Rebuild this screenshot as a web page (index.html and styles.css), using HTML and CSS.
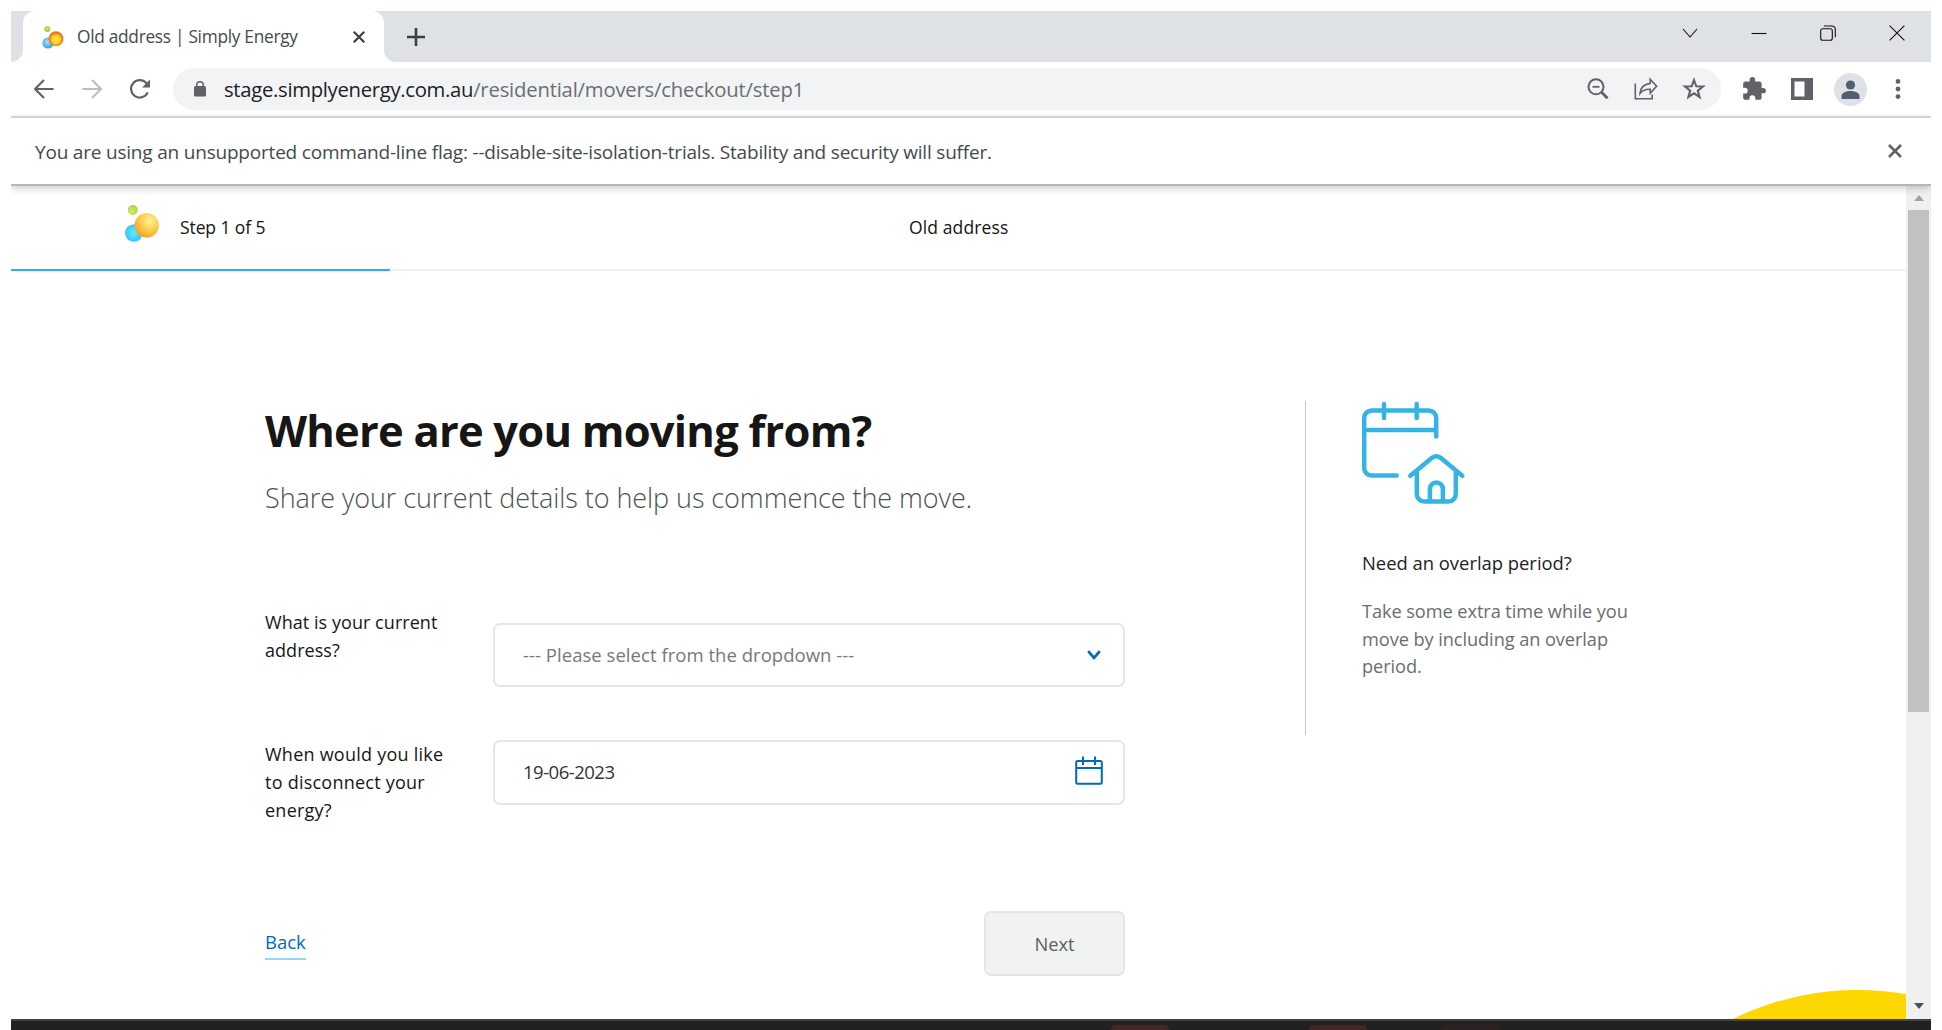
FILE: index.html
```
<!DOCTYPE html>
<html lang="en">
<head>
<meta charset="utf-8">
<title>Old address | Simply Energy</title>
<link rel="stylesheet" href="styles.css">
</head>
<body>
<div class="window">
  <div class="tabstrip">
    <div class="prev-tab"></div>
    <div class="tab">
      <svg class="favicon" width="22" height="24" viewBox="0 0 22 24">
        <defs>
          <radialGradient id="fo" cx=".5" cy=".55" r=".5"><stop offset="0" stop-color="#fff04a"/><stop offset=".55" stop-color="#fdd01f"/><stop offset=".85" stop-color="#f4811f"/><stop offset="1" stop-color="#e8701a"/></radialGradient>
          <radialGradient id="fb" cx=".45" cy=".4" r=".6"><stop offset="0" stop-color="#a9e0fb"/><stop offset="1" stop-color="#2f9fe0"/></radialGradient>
          <radialGradient id="fg" cx=".5" cy=".4" r=".6"><stop offset="0" stop-color="#d5e87a"/><stop offset="1" stop-color="#9cc43a"/></radialGradient>
        </defs>
        <circle cx="5.3" cy="3" r="3" fill="url(#fg)"/><circle cx="6" cy="17" r="5.6" fill="url(#fb)"/><circle cx="14" cy="12.7" r="7.4" fill="url(#fo)"/>
      </svg>
      <span class="tab-title">Old address | Simply Energy</span>
      <svg class="tab-close" width="12" height="12" viewBox="0 0 12 12"><path d="M.7.7l10.6 10.6M11.3.7L.7 11.3" stroke="#3c4043" stroke-width="2.2"/></svg>
    </div>
    <svg class="new-tab" width="18" height="18" viewBox="0 0 18 18"><path d="M9 0v18M0 9h18" stroke="#3c4043" stroke-width="2.6"/></svg>
    <div class="win-controls">
      <svg width="16" height="16" viewBox="0 0 16 16"><path d="M1 4l7 8 7-8"/></svg>
      <svg width="16" height="16" viewBox="0 0 16 16"><path d="M.5 8.5h15"/></svg>
      <svg width="16" height="16" viewBox="0 0 16 16"><rect x=".7" y="3.7" width="11.6" height="11.6" rx="2"/><path d="M3.8 1h7.6q3.9 0 3.9 3.8v7.4"/></svg>
      <svg width="16" height="16" viewBox="0 0 16 16"><path d="M.6.6l14.8 14.8M15.4.6L.6 15.4"/></svg>
    </div>
  </div>

  <div class="toolbar">
    <div class="nav">
      <svg width="20" height="20" viewBox="0 0 20 20" stroke="#5f6368"><path d="M19.5 10H2M10 1L1 10l9 9"/></svg>
      <svg width="20" height="20" viewBox="0 0 20 20" stroke="#bcbec1"><path d="M.5 10H18M10 1l9 9-9 9"/></svg>
      <svg width="22" height="22" viewBox="0 0 22 22" stroke="#5f6368"><path d="M18.7 14.4A8.7 8.7 0 1 1 17.6 5.4"/><path d="M21 1.500v8h-8z" fill="#5f6368" stroke="none"/></svg>
    </div>
    <div class="omnibox">
      <svg class="lock" width="12" height="16" viewBox="0 0 12 16"><rect y="5" width="12" height="10.5" rx="1.5" fill="#5f6368"/><path d="M2.7 6V4a3.3 3.3 0 0 1 6.600 0v2" fill="none" stroke="#5f6368" stroke-width="1.5"/></svg>
      <span class="host">stage.simplyenergy.com.au</span><span class="path">/residential/movers/checkout/step1</span>
      <div class="omni-icons">
        <svg width="24" height="24" viewBox="0 0 24 24" fill="none" stroke="#5f6368" stroke-width="2"><circle cx="10" cy="9.8" r="7.5"/><path d="M6.5 9.8h7" stroke-width="1.8"/><path d="M15.3 15l6.2 6.2" stroke-width="2.8"/></svg>
        <svg width="24" height="24" viewBox="0 0 24 24" fill="none" stroke="#5f6368" stroke-width="1.6"><path d="M1.3 6.5v15.2h16.9v-4.2"/><path d="M16.2 2.3l6.4 6.9-6.4 6.9v-3.9c-4.2-.2-7.6.8-10.2 4.3.4-5.2 3.2-9.2 10.2-10.100z"/></svg>
        <svg width="24" height="24" viewBox="0 0 24 24" fill="none" stroke="#5f6368" stroke-width="2.1"><path d="M12 3l2.3 6.3 6.7.2-5.2 4.100 1.8 6.4-5.6-3.7-5.6 3.7 1.8-6.4L3 9.5l6.7-.2z"/></svg>
      </div>
    </div>
    <div class="actions">
      <svg width="26" height="26" viewBox="0 0 24 24" fill="#5f6368"><path d="M20.5 11H19V7c0-1.1-.9-2-2-2h-4V3.5a2.5 2.5 0 0 0-5 0V5H4c-1.1 0-2 .9-2 2v3.8h1.5a2.7 2.7 0 0 1 0 5.4H2V20c0 1.1.9 2 2 2h3.8v-1.5a2.7 2.7 0 0 1 5.4 0V22H17c1.1 0 2-.9 2-2v-4h1.5a2.5 2.5 0 0 0 0-5z"/></svg>
      <svg width="22" height="22" viewBox="0 0 22 22"><path d="M0 0h22v22H0zM3.5 3.5v15h10v-15z" fill="#5f6368" fill-rule="evenodd"/></svg>
      <svg width="33" height="33" viewBox="0 0 33 33"><circle cx="16.5" cy="16.5" r="16.5" fill="#dee1e6"/><circle cx="16.5" cy="12" r="4.6" fill="#535d70"/><path d="M7.5 26v-3c0-3.2 5-5 9-5s9 1.8 9 5v3z" fill="#535d70"/></svg>
      <svg width="6" height="20" viewBox="0 0 6 20" fill="#5f6368"><circle cx="3" cy="2.4" r="2.4"/><circle cx="3" cy="10" r="2.4"/><circle cx="3" cy="17.6" r="2.4"/></svg>
    </div>
  </div>

  <div class="infobar">
    <span>You are using an unsupported command-line flag: --disable-site-isolation-trials. Stability and security will suffer.</span>
    <svg width="14" height="14" viewBox="0 0 14 14"><path d="M1 1l12 12M13 1L1 13" stroke="#5f6368" stroke-width="2.6"/></svg>
  </div>

  <div class="viewport">
    <div class="page">
      <header class="steps">
        <svg class="logo" width="36" height="38" viewBox="0 0 36 38">
          <defs>
            <radialGradient id="lo" cx=".62" cy=".32" r=".7"><stop offset="0" stop-color="#fff0a0"/><stop offset=".5" stop-color="#fdd24e"/><stop offset="1" stop-color="#f8a02c"/></radialGradient>
            <radialGradient id="lb" cx=".5" cy=".5" r=".55"><stop offset="0" stop-color="#5ff0fe"/><stop offset="1" stop-color="#33bff8"/></radialGradient>
            <radialGradient id="lg" cx=".4" cy=".65" r=".6"><stop offset="0" stop-color="#d3ea66"/><stop offset="1" stop-color="#aed845"/></radialGradient>
          </defs>
          <circle cx="7.8" cy="5" r="5" fill="url(#lg)"/><circle cx="8.8" cy="28" r="8.8" fill="url(#lb)"/><circle cx="21.7" cy="20.3" r="12.2" fill="url(#lo)"/>
        </svg>
        <span class="step-count">Step 1 of 5</span>
        <span class="step-name">Old address</span>
      </header>
      <div class="progress"><div class="progress-fill"></div></div>

      <main class="content">
        <section class="form">
          <h1>Where are you moving from?</h1>
          <p class="lead">Share your current details to help us commence the move.</p>
          <div class="row address-row">
            <label>What is your current<br>address?</label>
            <div class="field select">
              <span>--- Please select from the dropdown ---</span>
              <svg width="14" height="10" viewBox="0 0 14 10"><path d="M1.2 1.2L7 7.8l5.8-6.6" fill="none" stroke="#006bb8" stroke-width="2.8"/></svg>
            </div>
          </div>
          <div class="row date-row">
            <label>When would you like<br>to disconnect your<br>energy?</label>
            <div class="field date">
              <span>19-06-2023</span>
              <svg width="28" height="29" viewBox="0 0 28 29" fill="none" stroke="#006bb8" stroke-width="2"><rect x="1.2" y="5" width="25.6" height="22.7" rx="1.5"/><path d="M1 12h26M8 .5v8.5M20 .5v8.5"/></svg>
            </div>
          </div>
          <div class="form-footer">
            <a class="back">Back</a>
            <button class="next">Next</button>
          </div>
        </section>
        <aside class="tip">
          <svg width="104" height="104" viewBox="0 0 104 104" fill="none" stroke="#35b3e4" stroke-width="4.5" stroke-linecap="round" stroke-linejoin="round">
            <path d="M34.7 74.500H9.7a7.5 7.5 0 0 1-7.5-7.5V17A7.5 7.5 0 0 1 9.7 9.500h57a7.5 7.5 0 0 1 7.5 7.5V35.500M2.2 29h72M22 3v14M54.7 3v14"/>
            <path d="M48.300 74.800l21.700-18q4.300-3 8.600 0l21.700 18M54.800 71.500V93a7.500 7.500 0 0 0 7.500 7.500h24a7.500 7.500 0 0 0 7.500-7.500V71.500M67.900 100.500V88a6.500 6.500 0 0 1 13 0v12.500"/>
          </svg>
          <h2>Need an overlap period?</h2>
          <p>Take some extra time while you<br>move by including an overlap<br>period.</p>
        </aside>
      </main>
      <div class="blob"></div>
    </div>
    <div class="scrollbar">
      <div class="arrow up"></div>
      <div class="thumb"></div>
      <div class="arrow down"></div>
    </div>
  </div>
  <div class="taskbar"><i class="glow g1"></i><i class="glow g2"></i><i class="glow g3"></i></div>
</div>
</body>
</html>
```
FILE: styles.css
```
* { box-sizing: border-box; }
body { margin: 0; background: #fff; font-family: "Open Sans", "Noto Sans", sans-serif; overflow: hidden; }
svg { display: block; flex: none; }
h1, h2, p { margin: 0; }
span, h1, .lead { white-space: nowrap; }
.window { width: 1920px; height: 1019px; margin: 11px 0 0 11px; display: flex; flex-direction: column; overflow: hidden; }

/* Tab strip */
.tabstrip { height: 51px; flex: none; display: flex; align-items: center; background: linear-gradient(#fff, #fff) 0 100% / 385px 12px no-repeat #dee1e6; }
.prev-tab { width: 12px; height: 51px; background: #dee1e6; border-bottom-right-radius: 12px; }
.tab { width: 361px; height: 51px; background: #fff; border-radius: 12px 12px 0 0; display: flex; align-items: center; padding: 0 19px; }
.favicon { margin-top: 2px; }
.tab-title { margin-left: 13px; width: 276px; font-size: 17.3px; letter-spacing: -.28px; color: #45494d; }
.new-tab { box-sizing: content-box; padding: 17px 12px 16px 23px; margin-right: auto; background: #dee1e6; border-bottom-left-radius: 12px; }
.win-controls { display: flex; gap: 53px; margin: -8px 26px 0 0; }
.win-controls svg { fill: none; stroke: #111; stroke-width: 1.1; }

/* Toolbar */
.toolbar { height: 56px; flex: none; display: flex; align-items: center; border-bottom: 2px solid #dadcdf; background: #fff; }
.nav { width: 162px; display: flex; align-items: center; gap: 27.5px; padding-left: 23px; }
.nav svg { fill: none; stroke-width: 2.2; }
.omnibox { width: 1548px; height: 42px; border-radius: 21px; background: #f1f3f4; display: flex; align-items: center; padding: 0 15px 0 21px; font-size: 20.3px; }
.lock { margin-right: 18px; }
.host { color: #202124; letter-spacing: -.31px; }
.path { color: #6b6f73; letter-spacing: -.2px; }
.omni-icons { margin-left: auto; display: flex; gap: 24px; }
.actions { display: flex; align-items: center; padding-left: 20px; }
.actions svg:nth-child(2) { margin-left: 24px; }
.actions svg:nth-child(3) { margin-left: 21px; }
.actions svg:nth-child(4) { margin-left: 28px; }

.infobar { height: 68px; flex: none; display: flex; align-items: center; justify-content: space-between; padding: 1px 29px 0 24px; border-bottom: 2px solid #b4b6b8; font-size: 19px; letter-spacing: -.2px; color: #45494d; position: relative; z-index: 1; background: #fff; box-shadow: 0 2px 8px rgba(0,0,0,.22); }
.infobar svg { margin-top: -2px; }

/* Page */
.viewport { height: 833px; flex: none; display: flex; }
.page { width: 1895px; position: relative; overflow: hidden; }
.steps { height: 83px; display: flex; align-items: center; padding-bottom: 2px; font-size: 17.5px; font-weight: 500; color: #141414; }
.logo { margin: -5px 0 0 114px; }
.step-count { margin-left: 19px; width: 729px; letter-spacing: -.1px; }
.step-name { letter-spacing: .12px; }
.progress { height: 2px; background: #f1f1f1; }
.progress-fill { width: 379px; height: 2px; background: #31afe0; }
.content { display: flex; padding: 130px 0 0 254px; }
.form { width: 860px; }
h1 { margin-top: 5px; font-size: 43.5px; line-height: 50px; font-weight: 700; letter-spacing: -.78px; color: #161616; }
.lead { margin-top: 24px; font-size: 27px; line-height: 36px; font-weight: 300; letter-spacing: -.07px; color: #4d5255; }
.row { display: flex; }
.row label { width: 228px; font-size: 18px; line-height: 27.5px; font-weight: 500; letter-spacing: .05px; color: #161616; }
.address-row { margin-top: 93px; }
.date-row { margin-top: 53px; }
.date-row label { line-height: 28px; letter-spacing: .24px; }
.field { width: 632px; height: 65px; border: 2px solid #e5e6e6; border-radius: 7px; display: flex; align-items: center; justify-content: space-between; padding-left: 28px; font-size: 18.5px; }
.select { height: 64px; margin-top: 14px; padding: 0 22px 2px 28px; color: #76797b; letter-spacing: .04px; }
.select svg { margin-top: 2px; }
.date { padding: 0 20px 2px 28px; color: #333; letter-spacing: -.5px; }
.date svg { margin-top: -3px; }
.form-footer { display: flex; justify-content: space-between; align-items: flex-start; margin-top: 87px; }
.back { margin-top: 17px; height: 32px; border-bottom: 2px solid #95d7f0; color: #0069bd; font-size: 18.5px; line-height: 28px; font-weight: 500; }
.next { width: 141px; height: 65px; border: 2px solid #e4e5e5; border-radius: 7px; background: #f1f3f3; color: #5b5f62; font: 500 18.3px "Open Sans", "Noto Sans", sans-serif; padding: 0; }
.tip { margin-left: 180px; height: 334px; border-left: 1px solid #c6c8c9; padding-left: 56px; font-size: 18.2px; }
.tip h2 { margin-top: 44px; font-size: 18.4px; line-height: 28px; font-weight: 500; color: #222; }
.tip p { margin-top: 21px; line-height: 27.5px; color: #6a6d6f; letter-spacing: -.07px; }
.blob { position: absolute; left: 1566px; top: 804px; width: 560px; height: 560px; border-radius: 50%; background: #ffd700; }

.scrollbar { width: 25px; background: #f0f0f0; display: flex; flex-direction: column; align-items: center; padding: 9px 0 10px; }
.arrow { border: 5.5px solid transparent; }
.up { border-bottom: 6px solid #a3a3a3; border-top: 0; height: 6px; }
.down { border-top: 6px solid #505050; border-bottom: 0; margin-top: auto; }
.thumb { width: 21px; height: 502px; margin-top: 9px; background: #c1c1c1; }

.taskbar { height: 11px; flex: none; background: #212121; border-top: 2px solid #424242; display: flex; padding: 4px 0 0 1100px; }
.glow { width: 58px; height: 5px; border-radius: 6px 6px 0 0; background: #452525; }
.g2 { margin-left: 140px; }
.g3 { margin-left: 75px; background: #2e2122; }
```
